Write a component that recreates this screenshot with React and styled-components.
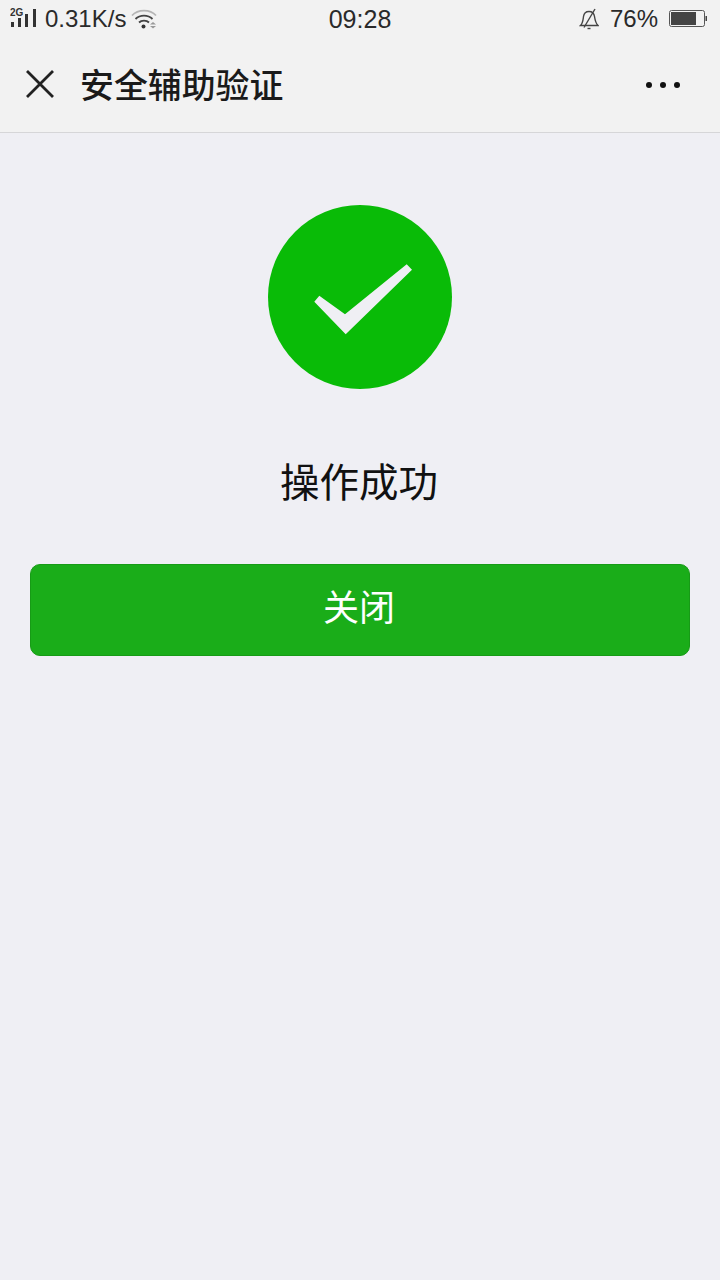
import React from 'react'
import styled, { createGlobalStyle } from 'styled-components'

const Global = createGlobalStyle`
  html, body { margin: 0; padding: 0; background: #efeff4; }
  body { font-family: "Liberation Sans", "Noto Sans CJK SC", sans-serif; }
`

const Page = styled.div`
  width: 720px;
  height: 1280px;
  overflow: hidden;
  display: flex;
  flex-direction: column;
  background: #efeff4;
`

const Header = styled.header`
  height: 132px;
  background: #f2f2f2;
  border-bottom: 1px solid #d6d6d8;
  display: flex;
  flex-direction: column;
`

const StatusBar = styled.div`
  height: 38px;
  display: grid;
  grid-template-columns: 1fr auto 1fr;
  align-items: center;
  padding: 0 10px;
  font-size: 24px;
  color: #2a2a2a;
`

const StatusGroup = styled.div`
  display: flex;
  align-items: center;
  justify-content: ${p => (p.$end ? 'flex-end' : 'flex-start')};
  gap: ${p => p.$gap || 0}px;
  padding-right: ${p => (p.$end ? 3 : 0)}px;
`

const Speed = styled.span`
  margin: 0 5px 0 9px;
`

const Clock = styled.span`
  font-size: 25px;
`

const NavBar = styled.nav`
  flex: 1;
  display: flex;
  align-items: center;
  padding: 0 39px 2px 25px;
`

const Title = styled.h1`
  flex: 1;
  margin: 0 0 0 25px;
  font: 500 33.9px/1 "Noto Sans CJK SC", sans-serif;
  color: #1a1a1a;
`

const MoreSlot = styled.div`
  display: flex;
  padding-top: 2px;
`

const Main = styled.main`
  flex: 1;
  display: flex;
  flex-direction: column;
  align-items: center;
  padding: 72px 30px 0;
`

const Message = styled.div`
  margin: 65px 2px 0 0;
  font: 400 39.5px/52px "Noto Sans CJK SC", sans-serif;
  color: #111;
`

const CloseButton = styled.button`
  margin-top: 58px;
  width: 660px;
  height: 92px;
  box-sizing: border-box;
  padding: 0 2px 10px 0;
  background: #1aad19;
  border: 1px solid #179b16;
  border-radius: 10px;
  color: #fff;
  font: 400 36px/1 "Noto Sans CJK SC", sans-serif;
`

const SignalIcon = () => (
  <svg width="26" height="24" viewBox="0 -2 26 24">
    <text x="0" y="7" fontSize="10" fontWeight="700" fontFamily="Liberation Sans, sans-serif" fill="#333">2G</text>
    <rect x="1" y="13" width="3" height="5" fill="#333" />
    <rect x="8" y="9" width="3" height="9" fill="#333" />
    <rect x="15" y="5" width="3" height="13" fill="#333" />
    <rect x="23" y="0" width="3" height="18" fill="#333" />
  </svg>
)

const WifiIcon = () => (
  <svg width="26" height="20" viewBox="0 0 26 20" fill="none" stroke="#444" strokeWidth="1.800">
    <path d="M1 6.500 C7 0 19 0 25 6.500" stroke="#b5b5b5" />
    <path d="M4.500 10 C9 5.500 17 5.500 21.500 10" />
    <path d="M8 13.500 C10.500 11 15.500 11 18 13.500" />
    <circle cx="12.500" cy="17.500" r="2" fill="#333" stroke="none" />
    <path d="M19 15.500 h6 l-3 -2.500z M19 17 h6 l-3 2.500z" fill="#999" stroke="none" />
  </svg>
)

const MuteIcon = () => (
  <svg width="20" height="22" viewBox="0 0 20 22" fill="none" stroke="#444" strokeWidth="1.400">
    <path d="M1.500 17.500 C4 15 4 12 4.500 8.500 C5 5 7.500 3.500 10 3.500 C12.500 3.500 15 5 15.500 8.500 C16 12 16.500 15 19 17.500 Z" />
    <path d="M16 1 L5 19.500" />
    <path d="M8.500 20.500 h3" />
  </svg>
)

const BatteryIcon = () => (
  <svg width="38" height="20" viewBox="0 0 38 20">
    <rect x="0.500" y="1.500" width="35" height="16" rx="2" fill="none" stroke="#555" />
    <rect x="2" y="3" width="25" height="13" fill="#444" />
    <rect x="36.500" y="7" width="1.500" height="5" fill="#444" />
  </svg>
)

const CloseIcon = () => (
  <svg width="30" height="30" viewBox="0 0 30 30" stroke="#222" strokeWidth="2.800">
    <path d="M2 2 L28 28 M28 2 L2 28" />
  </svg>
)

const MoreIcon = () => (
  <svg width="36" height="8" viewBox="0 0 36 8" fill="#111">
    <circle cx="4" cy="4" r="3" />
    <circle cx="18" cy="4" r="3" />
    <circle cx="32" cy="4" r="3" />
  </svg>
)

const SuccessIcon = () => (
  <svg width="184" height="184" viewBox="0 0 184 184">
    <circle cx="92" cy="92" r="92" fill="#09bb07" />
    <path d="M46.300 96.700 L51.300 90.700 L77 109.300 L138.700 59.300 L144 64.700 L77.700 129.300 Z" fill="#efeff4" />
  </svg>
)

export default function App() {
  return (
    <Page>
      <Global />
      <Header>
        <StatusBar>
          <StatusGroup>
            <SignalIcon />
            <Speed>0.31K/s</Speed>
            <WifiIcon />
          </StatusGroup>
          <Clock>09:28</Clock>
          <StatusGroup $end $gap={11}>
            <MuteIcon />
            <span>76%</span>
            <BatteryIcon />
          </StatusGroup>
        </StatusBar>
        <NavBar>
          <CloseIcon />
          <Title>安全辅助验证</Title>
          <MoreSlot>
            <MoreIcon />
          </MoreSlot>
        </NavBar>
      </Header>
      <Main>
        <SuccessIcon />
        <Message>操作成功</Message>
        <CloseButton>关闭</CloseButton>
      </Main>
    </Page>
  )
}
